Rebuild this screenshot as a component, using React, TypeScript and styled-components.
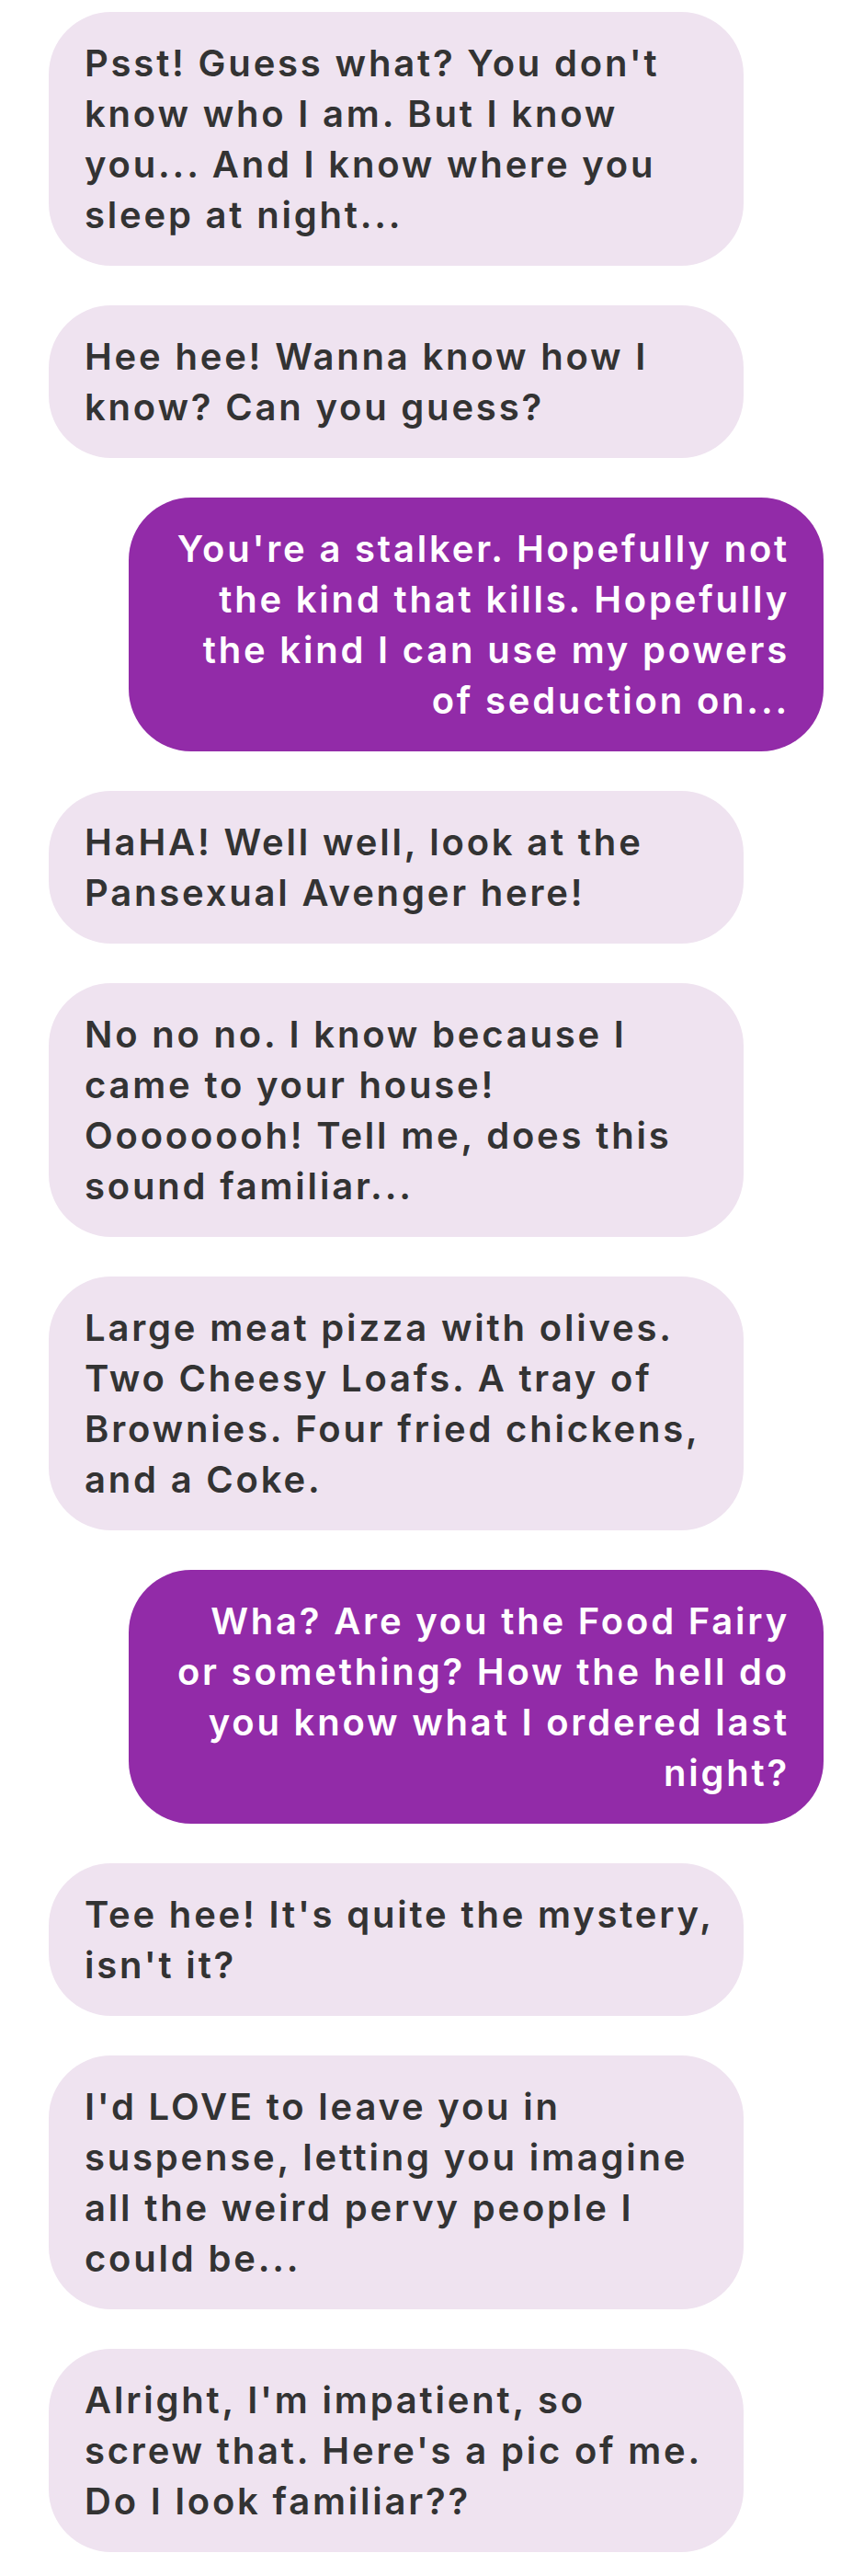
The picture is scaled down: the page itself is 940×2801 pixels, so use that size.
import React from "react";
import styled, { createGlobalStyle } from "styled-components";

const Global = createGlobalStyle`
  html, body { margin: 0; padding: 0; background: #ffffff; }
  body { font-family: "Inter", "Liberation Sans", sans-serif; }
`;

const Thread = styled.div`
  display: flex;
  flex-direction: column;
  gap: 43px;
  padding: 13px 44px 22px 53px;
`;

const Bubble = styled.div<{ $me?: boolean }>`
  box-sizing: border-box;
  width: 756px;
  align-self: ${(p) => (p.$me ? "flex-end" : "flex-start")};
  padding: 28px 37px 28px 39px;
  border-radius: 68px;
  background: ${(p) => (p.$me ? "#922ba8" : "#efe3f0")};
  color: ${(p) => (p.$me ? "#ffffff" : "#333333")};
  text-align: ${(p) => (p.$me ? "right" : "left")};
  font-family: "Inter", "Liberation Sans", sans-serif;
  font-weight: 600;
  font-size: 40px;
  letter-spacing: 2.8px;
  line-height: 55px;
  white-space: nowrap;
`;

type Msg = { me?: boolean; lines: string[] };

const messages: Msg[] = [
  { lines: ["Psst! Guess what? You don't", "know who I am. But I know", "you... And I know where you", "sleep at night..."] },
  { lines: ["Hee hee! Wanna know how I", "know? Can you guess?"] },
  { me: true, lines: ["You're a stalker. Hopefully not", "the kind that kills. Hopefully", "the kind I can use my powers", "of seduction on..."] },
  { lines: ["HaHA! Well well, look at the", "Pansexual Avenger here!"] },
  { lines: ["No no no. I know because I", "came to your house!", "Oooooooh! Tell me, does this", "sound familiar..."] },
  { lines: ["Large meat pizza with olives.", "Two Cheesy Loafs. A tray of", "Brownies. Four fried chickens,", "and a Coke."] },
  { me: true, lines: ["Wha? Are you the Food Fairy", "or something? How the hell do", "you know what I ordered last", "night?"] },
  { lines: ["Tee hee! It's quite the mystery,", "isn't it?"] },
  { lines: ["I'd LOVE to leave you in", "suspense, letting you imagine", "all the weird pervy people I", "could be..."] },
  { lines: ["Alright, I'm impatient, so", "screw that. Here's a pic of me.", "Do I look familiar??"] },
];

export default function App() {
  return (
    <>
      <Global />
      <Thread>
        {messages.map((m, i) => (
          <Bubble key={i} $me={m.me}>
            {m.lines.map((l, j) => (
              <React.Fragment key={j}>
                {j > 0 && <br />}
                {l}
              </React.Fragment>
            ))}
          </Bubble>
        ))}
      </Thread>
    </>
  );
}
